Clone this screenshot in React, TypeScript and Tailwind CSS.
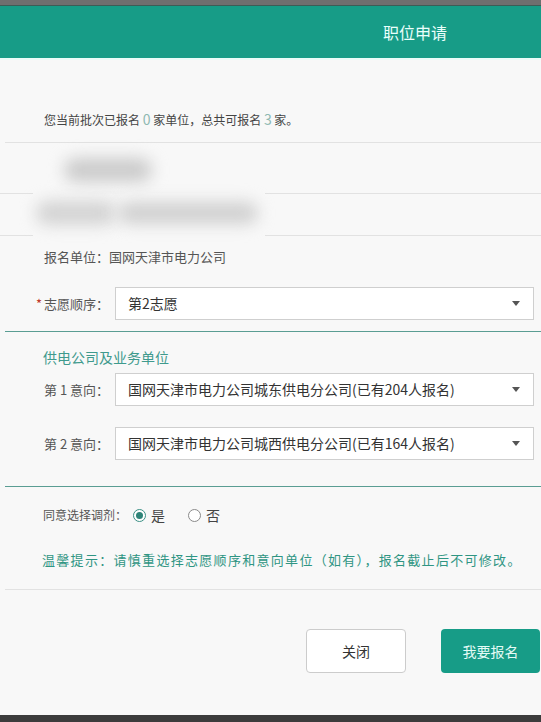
import { ReactNode } from 'react';

const font = "font-['Microsoft_YaHei','Noto_Sans_CJK_SC',sans-serif]";

function Caret() {
  return (
    <svg width="8" height="5" viewBox="0 0 8 5" className="shrink-0">
      <path d="M0 0h8L4 5z" fill="#555" />
    </svg>
  );
}

function SelectBox({ value }: { value: string }) {
  return (
    <div className="flex h-full flex-1 items-center justify-between border border-[#cfcfcf] bg-white pl-[12px] pr-[13px]">
      <span className="text-[14px] text-[#333]">{value}</span>
      <Caret />
    </div>
  );
}

function FieldRow({ label, value, className }: { label: ReactNode; value: string; className: string }) {
  return (
    <div className={`flex items-center pl-[44px] pr-[7px] ${className}`}>
      <div className="w-[71px] shrink-0 text-[13px] text-[#555]">{label}</div>
      <SelectBox value={value} />
    </div>
  );
}

function BrokenLine() {
  return (
    <div className="flex h-px">
      <div className="w-[33px] bg-[#e2e2e2]" />
      <div className="w-[232px]" />
      <div className="flex-1 bg-[#e2e2e2]" />
    </div>
  );
}

function Radio({ checked, label }: { checked: boolean; label: string }) {
  return (
    <div className="flex items-center gap-[5px]">
      <span
        className={`flex h-[13px] w-[13px] items-center justify-center rounded-full border ${
          checked ? 'border-[#3a8f84]' : 'border-[#8a8a8a]'
        } bg-white`}
      >
        {checked && <span className="h-[7px] w-[7px] rounded-full bg-[#2f8478]" />}
      </span>
      <span className="text-[14px] text-[#444]">{label}</span>
    </div>
  );
}

export default function App() {
  return (
    <div className={`flex h-[722px] w-[541px] flex-col overflow-hidden bg-[#f8f8f8] ${font}`}>
      <div className="h-[5px] bg-[#6f6f6f]" />
      <div className="h-px bg-[#3e5c56]" />
      <header className="flex h-[52px] items-center justify-end bg-[#179c87] pr-[94px]">
        <span className="text-[16px] text-[#eafffb]">职位申请</span>
      </header>
      <div className="h-[2px] bg-[#eafcf9]" />

      <div className="flex h-[82px] items-end pb-[12px] pl-[44px] text-[12px] text-[#444]">
        <span>
          您当前批次已报名 <span className="text-[14px] text-[#8fb8b2]">0</span> 家单位，总共可报名{' '}
          <span className="text-[14px] text-[#8fb8b2]">3</span> 家。
        </span>
      </div>
      <div className="ml-[5px] h-px bg-[#e2e2e2]" />

      {/* blurred personal info */}
      <div className="relative h-[50px]">
        <div className="absolute left-[64px] top-[15px] h-[24px] w-[88px] rounded-full bg-[#cbcbcb] blur-[8px]" />
      </div>
      <BrokenLine />
      <div className="relative h-[41px]">
        <div className="absolute left-[36px] top-[7px] h-[24px] w-[80px] rounded-full bg-[#d3d3d3] blur-[8px]" />
        <div className="absolute left-[118px] top-[8px] h-[22px] w-[140px] rounded-full bg-[#d0d0d0] blur-[8px]" />
      </div>
      <BrokenLine />

      <div className="flex h-[42px] items-center pl-[44px] text-[13px] text-[#555]">报名单位：国网天津市电力公司</div>

      <FieldRow
        className="mt-[9px] h-[33px]"
        label={
          <span className="-ml-[8px]">
            <span className="mr-[2px] text-[#c0392b]">*</span>志愿顺序：
          </span>
        }
        value="第2志愿"
      />
      <div className="mt-[11px] ml-[5px] h-px bg-[#5a9d93]" />

      <div className="mt-[15px] h-[20px] pl-[43px] text-[14px] leading-[20px] text-[#3f9a8d]">供电公司及业务单位</div>
      <FieldRow
        className="mt-[6px] h-[33px] pl-[43px]"
        label="第 1 意向："
        value="国网天津市电力公司城东供电分公司(已有204人报名)"
      />
      <FieldRow
        className="mt-[21px] h-[33px] pl-[43px]"
        label="第 2 意向："
        value="国网天津市电力公司城西供电分公司(已有164人报名)"
      />
      <div className="mt-[26px] ml-[5px] h-px bg-[#5a9d93]" />

      <div className="mt-[18px] flex h-[20px] items-center pl-[43px]">
        <span className="mr-[6px] text-[12px] text-[#555]">同意选择调剂：</span>
        <Radio checked label="是" />
        <div className="w-[23px]" />
        <Radio checked={false} label="否" />
      </div>

      <div className="mt-[25px] h-[20px] pl-[42px] text-[13px] leading-[20px] tracking-[1.3px] text-[#2f9583]">
        温馨提示：请慎重选择志愿顺序和意向单位（如有），报名截止后不可修改。
      </div>
      <div className="mt-[19px] ml-[5px] h-px bg-[#e2e2e2]" />

      <div className="mt-[39px] flex h-[44px] justify-end gap-[35px] pr-[1px]">
        <button className="h-full w-[100px] rounded-[4px] border border-[#cccccc] bg-white text-[14px] text-[#333]">
          关闭
        </button>
        <button className="h-full w-[99px] rounded-[4px] bg-[#179c87] text-[14px] text-[#e4fbf6]">我要报名</button>
      </div>

      <div className="flex-1" />
      <div className="h-[7px] bg-[#3c3c3c]" />
    </div>
  );
}
